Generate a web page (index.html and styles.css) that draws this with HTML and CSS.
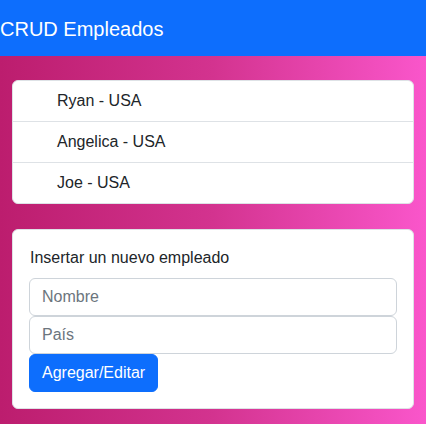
FILE: index.html
```html
<!DOCTYPE html>
<html lang="es">
<head>
<meta charset="utf-8">
<title>CRUD Empleados</title>
<link rel="stylesheet" href="styles.css">
</head>
<body>
<nav class="navbar"><span class="brand">CRUD Empleados</span></nav>
<main class="page">
  <ul class="list-card">
    <li class="list-item">Ryan - USA</li>
    <li class="list-item">Angelica - USA</li>
    <li class="list-item">Joe - USA</li>
  </ul>
  <form class="form-card">
    <label class="form-title">Insertar un nuevo empleado</label>
    <input class="field" type="text" placeholder="Nombre">
    <input class="field" type="text" placeholder="País">
    <button class="btn" type="button">Agregar/Editar</button>
  </form>
</main>
</body>
</html>
```
FILE: styles.css
```css
* { box-sizing: border-box; }
html, body { margin: 0; padding: 0; height: 100%; }
body {
  font-family: "Liberation Sans", Arial, sans-serif;
  font-size: 16px;
  line-height: 24px;
  color: #212529;
  display: flex;
  flex-direction: column;
}
.navbar {
  background: #0d6efd;
  height: 56px;
  display: flex;
  align-items: center;
  flex: none;
}
.brand {
  color: #fff;
  font-size: 20px;
  line-height: 30px;
  padding-top: 2px;
}
.page {
  flex: 1;
  background: linear-gradient(90deg, #bc1d6e 0%, #d3338f 50%, #fa56cb 100%);
  padding: 24px 12px 0;
  display: flex;
  flex-direction: column;
  gap: 25px;
}
.list-card {
  list-style: none;
  margin: 0;
  padding: 0;
  background: #fff;
  border: 1px solid #dee2e6;
  border-radius: 6px;
}
.list-item {
  padding: 8px 16px 8px 44px;
  border-top: 1px solid #dee2e6;
}
.list-item:first-child { border-top: none; }
.form-card {
  margin: 0;
  background: #fff;
  border: 1px solid #dee2e6;
  border-radius: 6px;
  padding: 16px;
  display: flex;
  flex-direction: column;
  align-items: flex-start;
}
.form-title {
  margin-bottom: 8px;
  padding-left: 1px;
}
.field {
  width: 100%;
  font: inherit;
  height: 38px;
  padding: 6px 12px;
  border: 1px solid #ced4da;
  border-radius: 6px;
  color: #212529;
  background: #fff;
}
.field::placeholder { color: #6c757d; }
.btn {
  font: inherit;
  color: #fff;
  background: #0d6efd;
  border: 1px solid #0d6efd;
  border-radius: 6px;
  padding: 6px 12px;
  height: 38px;
}
```
